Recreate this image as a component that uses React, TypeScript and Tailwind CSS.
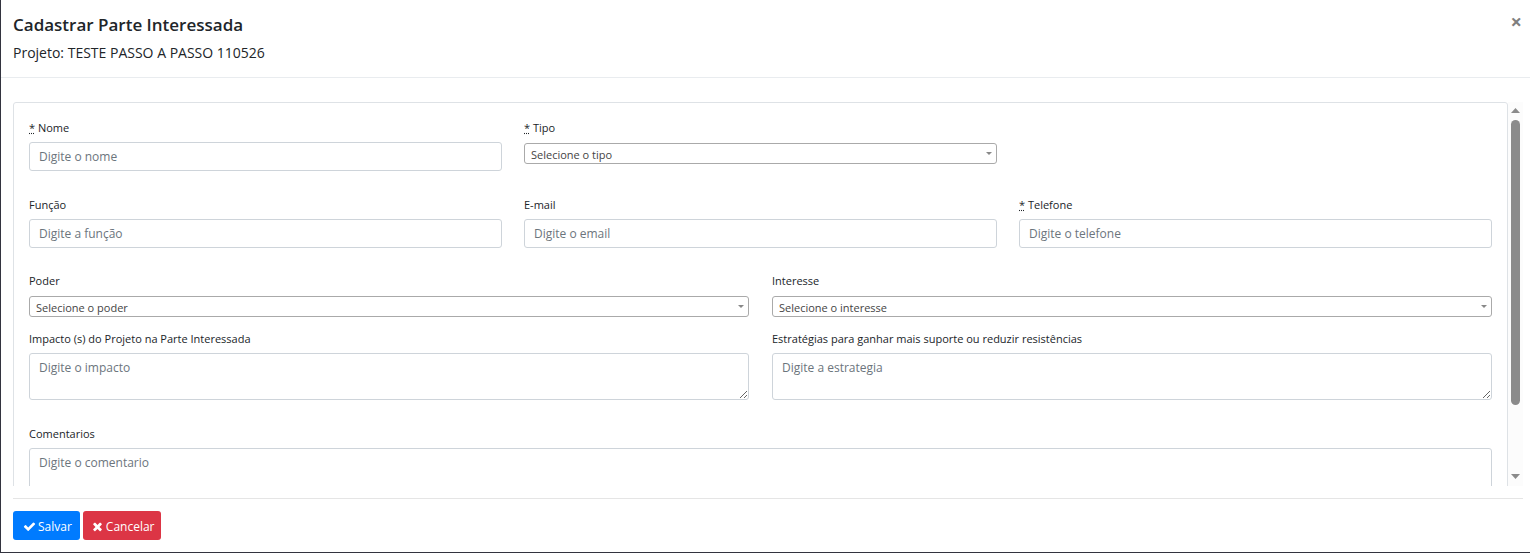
import type { ReactNode } from "react";

const CHECK =
  "M1671 566q0 40-28 68l-724 724-136 136q-28 28-68 28t-68-28l-136-136-362-362q-28-28-28-68t28-68l136-136q28-28 68-28t68 28l294 295 656-657q28-28 68-28t68 28l136 136q28 28 28 68z";
const TIMES =
  "M1490 1322q0 40-28 68l-136 136q-28 28-68 28t-68-28l-294-294-294 294q-28 28-68 28t-68-28l-136-136q-28-28-28-68t28-68l294-294-294-294q-28-28-28-68t28-68l136-136q28-28 68-28t68 28l294 294 294-294q28-28 68-28t68 28l136 136q28 28 28 68t-28 68l-294 294 294 294q28 28 28 68z";

function Icon({ d }: { d: string }) {
  return (
    <svg viewBox="0 0 1792 1792" className="size-[13px]" fill="currentColor" aria-hidden="true">
      <path d={d} />
    </svg>
  );
}

type FieldProps = { id: string; label: string; placeholder: string; required?: boolean };

function Field({ id, label, required, children }: { id: string; label: string; required?: boolean; children: ReactNode }) {
  return (
    <div className="min-w-0">
      <label htmlFor={id} className="block mb-[5px] text-[11px] leading-[18px]">
        {required && <><abbr title="Obrigatório" className="underline decoration-dotted">*</abbr>{" "}</>}
        {label}
      </label>
      {children}
    </div>
  );
}

function TextField({ id, label, placeholder, required }: FieldProps) {
  return (
    <Field id={id} label={label} required={required}>
      <input
        id={id}
        type="text"
        placeholder={placeholder}
        className="block w-full h-[29px] px-[9px] border border-[#ced4da] rounded-[3px] placeholder:text-[#6c757d]"
      />
    </Field>
  );
}

function SelectField({ id, label, placeholder, required }: FieldProps) {
  return (
    <Field id={id} label={label} required={required}>
      <div className="relative pt-px">
        <select
          id={id}
          className="block w-full h-[21px] pl-1.5 pr-5 pt-[3px] appearance-none border border-[#aaa] rounded-[3px] bg-white text-[11px] text-[#444]"
        >
          <option>{placeholder}</option>
        </select>
        <svg viewBox="0 0 6 3" className="absolute right-[5px] top-2.5 w-1.5 h-[3px] pointer-events-none" fill="#888">
          <path d="M0 0h6L3 3z" />
        </svg>
      </div>
    </Field>
  );
}

function AreaField({ id, label, placeholder }: FieldProps) {
  return (
    <Field id={id} label={label}>
      <textarea
        id={id}
        placeholder={placeholder}
        className="block w-full h-[47px] px-[9px] py-[5px] leading-[18px] border border-[#ced4da] rounded-[3px] placeholder:text-[#6c757d]"
      />
    </Field>
  );
}

function Scrollbar() {
  return (
    <div className="w-[15px] shrink-0 flex flex-col items-center bg-[#fcfcfc] pt-1.5 pb-[7px]" aria-hidden="true">
      <svg viewBox="0 0 9 5" className="w-[9px] h-[5px] shrink-0" fill="#8b8b8b">
        <path d="M4.5 0L9 5H0z" />
      </svg>
      <div className="flex-1 w-[9px] pt-[7px] pb-1.5">
        <div className="h-[82%] rounded-full bg-[#8b8b8b]" />
      </div>
      <svg viewBox="0 0 9 5" className="w-[9px] h-[5px] shrink-0" fill="#8b8b8b">
        <path d="M0 0h9L4.5 5z" />
      </svg>
    </div>
  );
}

export default function App() {
  return (
    <form
      className="min-h-screen bg-white border-l border-b border-[#33343f] text-[#212529] text-[12px] font-['Segoe_UI','Open_Sans',sans-serif]"
      onSubmit={(e) => e.preventDefault()}
    >
      <header className="flex justify-between items-start px-3 pt-3 pb-[14px] border-b border-[#e9ecef]">
        <div>
          <h1 className="text-[17px] leading-[26px] font-semibold">Cadastrar Parte Interessada</h1>
          <p className="mt-[5px] text-[14px] leading-5">Projeto: TESTE PASSO A PASSO 110526</p>
        </div>
        <button type="button" aria-label="Fechar" className="-mr-1 text-[20px] leading-5 font-bold text-[#7f7f7f]">
          ×
        </button>
      </header>

      <main className="pl-3 pr-[7px] pt-6 pb-3">
        <div className="flex max-h-96 overflow-hidden">
          <div className="flex-1 min-w-0 overflow-y-auto [scrollbar-width:none]">
            <div className="border border-[#dee2e6] rounded-[3px] px-[15px] pt-4 pb-6">
              <div className="grid grid-cols-3 gap-[22px] mb-[25px]">
                <TextField id="nome" label="Nome" placeholder="Digite o nome" required />
                <SelectField id="tipo" label="Tipo" placeholder="Selecione o tipo" required />
              </div>
              <div className="grid grid-cols-3 gap-[22px] mb-6">
                <TextField id="funcao" label="Função" placeholder="Digite a função" />
                <TextField id="email" label="E-mail" placeholder="Digite o email" />
                <TextField id="telefone" label="Telefone" placeholder="Digite o telefone" required />
              </div>
              <div className="grid grid-cols-2 gap-[23px] mb-[13px]">
                <SelectField id="poder" label="Poder" placeholder="Selecione o poder" />
                <SelectField id="interesse" label="Interesse" placeholder="Selecione o interesse" />
              </div>
              <div className="grid grid-cols-2 gap-[23px] mb-[25px]">
                <AreaField id="impacto" label="Impacto (s) do Projeto na Parte Interessada" placeholder="Digite o impacto" />
                <AreaField
                  id="estrategia"
                  label="Estratégias para ganhar mais suporte ou reduzir resistências"
                  placeholder="Digite a estrategia"
                />
              </div>
              <AreaField id="comentario" label="Comentarios" placeholder="Digite o comentario" />
            </div>
          </div>
          <Scrollbar />
        </div>
      </main>

      <footer className="ml-3 mr-[7px] py-3 flex gap-[3px] border-t border-[#e5e5e5] text-white">
        <button type="submit" className="flex items-center gap-0.5 h-[29px] pl-2.5 pr-2 pt-0.5 rounded-[3px] bg-[#007bff]">
          <Icon d={CHECK} />
          Salvar
        </button>
        <button type="button" className="flex items-center gap-0.5 h-[29px] pl-2 pr-1.5 pt-0.5 rounded-[3px] bg-[#dc3545]">
          <Icon d={TIMES} />
          Cancelar
        </button>
      </footer>
    </form>
  );
}
